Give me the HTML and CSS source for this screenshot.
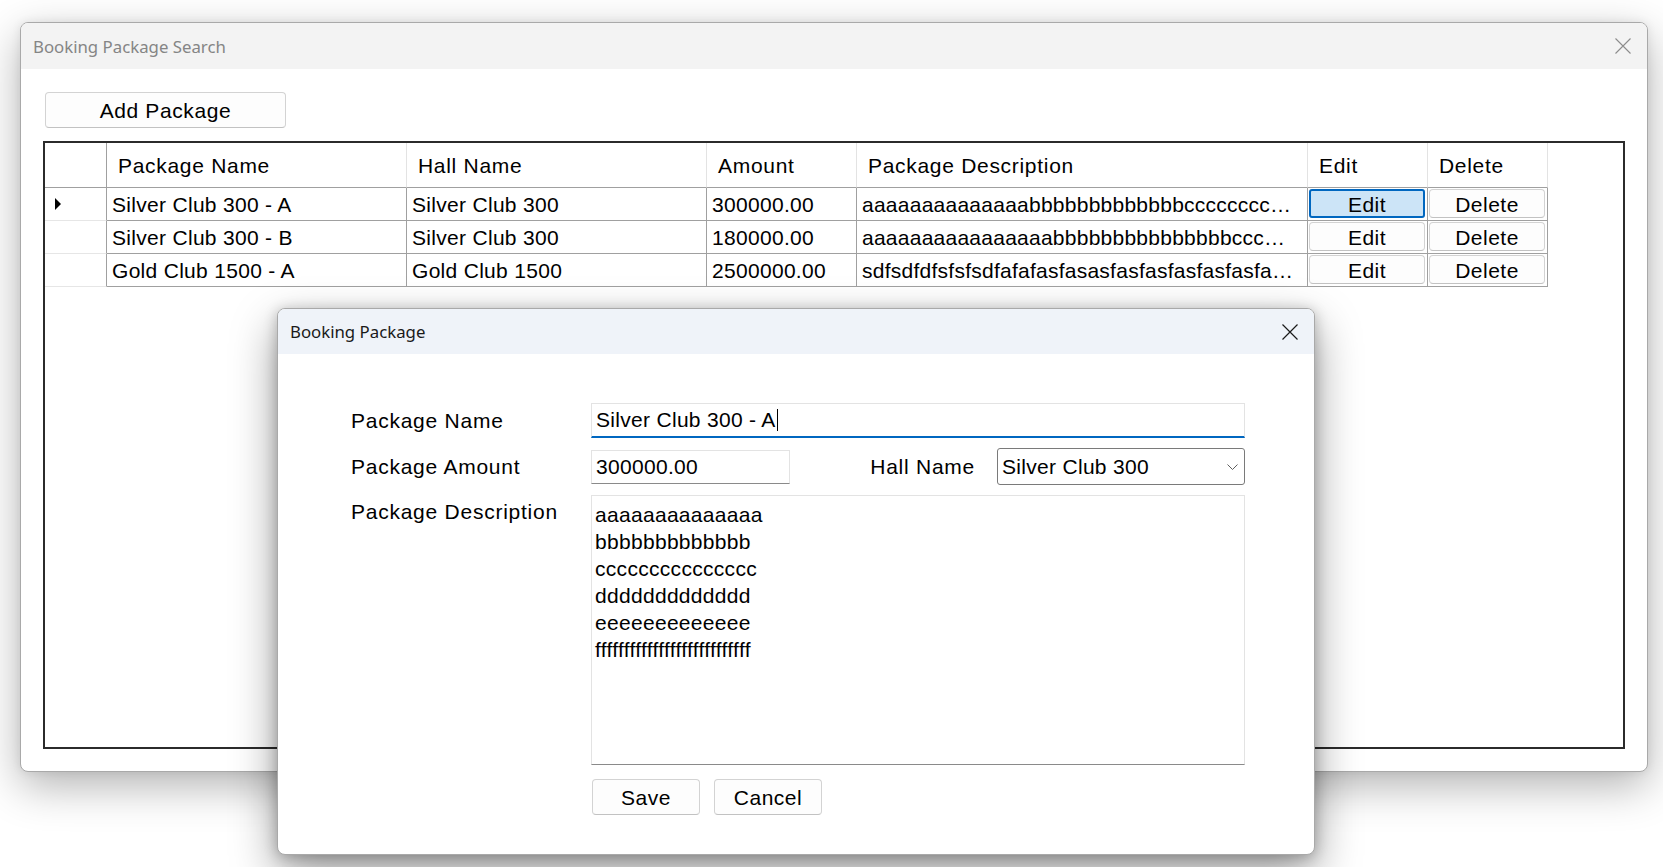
FILE: index.html
```html
<!DOCTYPE html>
<html lang="en">
<head>
<meta charset="utf-8">
<title>Booking Package Search</title>
<link rel="stylesheet" href="styles.css">
</head>
<body>
<div class="window main-window">
  <div class="titlebar">
    <span class="title">Booking Package Search</span>
    <svg class="close" viewBox="0 0 16 16" width="16" height="16"><path d="M0.5 0.5 L15.5 15.5 M15.5 0.5 L0.5 15.5" stroke="#8c8c8c" stroke-width="1.1" fill="none"/></svg>
  </div>
  <div class="main-content">
    <button class="btn add-btn">Add Package</button>
    <div class="grid">
      <div class="gcell rowhead hdr"></div>
      <div class="gcell hdr">Package Name</div>
      <div class="gcell hdr">Hall Name</div>
      <div class="gcell hdr">Amount</div>
      <div class="gcell hdr">Package Description</div>
      <div class="gcell hdr">Edit</div>
      <div class="gcell hdr">Delete</div>

      <div class="gcell rowhead"><span class="current-arrow"></span></div>
      <div class="gcell">Silver Club 300 - A</div>
      <div class="gcell">Silver Club 300</div>
      <div class="gcell">300000.00</div>
      <div class="gcell desc">aaaaaaaaaaaaaabbbbbbbbbbbbbcccccccccccccccdddddddddddddeeeeeeeeeeeeefffffffffffffffffffffffffff</div>
      <div class="gcell btncell"><button class="btn cellbtn selected">Edit</button></div>
      <div class="gcell btncell"><button class="btn cellbtn">Delete</button></div>

      <div class="gcell rowhead"></div>
      <div class="gcell">Silver Club 300 - B</div>
      <div class="gcell">Silver Club 300</div>
      <div class="gcell">180000.00</div>
      <div class="gcell desc">aaaaaaaaaaaaaaaabbbbbbbbbbbbbbbcccccccccccccccddddddddddddd</div>
      <div class="gcell btncell"><button class="btn cellbtn">Edit</button></div>
      <div class="gcell btncell"><button class="btn cellbtn">Delete</button></div>

      <div class="gcell rowhead"></div>
      <div class="gcell">Gold Club 1500 - A</div>
      <div class="gcell">Gold Club 1500</div>
      <div class="gcell">2500000.00</div>
      <div class="gcell desc">sdfsdfdfsfsfsdfafafasfasasfasfasfasfasfasfasfasfasfasf</div>
      <div class="gcell btncell"><button class="btn cellbtn">Edit</button></div>
      <div class="gcell btncell"><button class="btn cellbtn">Delete</button></div>
    </div>
  </div>
</div>

<div class="window dialog">
  <div class="titlebar">
    <span class="title">Booking Package</span>
    <svg class="close" viewBox="0 0 16 16" width="16" height="16"><path d="M0.5 0.5 L15.5 15.5 M15.5 0.5 L0.5 15.5" stroke="#1a1a1a" stroke-width="1.2" fill="none"/></svg>
  </div>
  <div class="form">
    <div class="label">Package Name</div>
    <div class="field name-field">Silver Club 300 - A<span class="caret"></span></div>

    <div class="label">Package Amount</div>
    <div class="amount-row">
      <div class="field amount-field">300000.00</div>
      <div class="hall-group">
        <span class="hall-label">Hall Name</span>
        <div class="combo">
          <span>Silver Club 300</span>
          <svg class="chevron" viewBox="0 0 11 6" width="11" height="6"><path d="M0.5 0.5 L5.5 5.5 L10.5 0.5" stroke="#5f5f5f" stroke-width="1" fill="none"/></svg>
        </div>
      </div>
    </div>

    <div class="label label-top">Package Description</div>
    <div class="field desc-field">aaaaaaaaaaaaaa
bbbbbbbbbbbbb
ccccccccccccccc
ddddddddddddd
eeeeeeeeeeeee
fffffffffffffffffffffffffff</div>

    <div class="actions">
      <button class="btn act-btn">Save</button>
      <button class="btn act-btn">Cancel</button>
    </div>
  </div>
</div>
</body>
</html>
```
FILE: styles.css
```css
* { box-sizing: border-box; }

html, body {
  margin: 0;
  padding: 0;
}

body {
  width: 1663px;
  height: 867px;
  position: relative;
  overflow: hidden;
  background: #ffffff;
  font-family: "Liberation Sans", Arial, sans-serif;
  font-size: 21px;
  color: #000;
}

/* ---------- windows ---------- */
.window {
  position: absolute;
  display: flex;
  flex-direction: column;
  background: #ffffff;
  border: 1px solid #a9a9a9;
  border-radius: 8px;
  overflow: hidden;
}

.main-window {
  left: 20px;
  top: 22px;
  width: 1628px;
  height: 750px;
  box-shadow: 0 14px 44px rgba(0, 0, 0, 0.3), 0 0 10px rgba(0, 0, 0, 0.08);
}

.dialog {
  left: 277px;
  top: 308px;
  width: 1038px;
  height: 547px;
  box-shadow: 0 18px 46px rgba(0, 0, 0, 0.4), 0 2px 14px rgba(0, 0, 0, 0.24);
}

.titlebar {
  flex: none;
  display: flex;
  align-items: center;
  justify-content: space-between;
  padding: 0 16px 0 12px;
  font-family: "Noto Sans", "Open Sans", sans-serif;
  font-size: 16.8px;
}

.main-window .titlebar {
  height: 46px;
  background: #f3f3f3;
  color: #858585;
}

.dialog .titlebar {
  height: 45px;
  background: #eff3f9;
  color: #1a1a1a;
}

.close {
  display: block;
  flex: none;
}

/* ---------- buttons ---------- */
.btn {
  font-family: "Liberation Sans", Arial, sans-serif;
  font-size: 21px;
  letter-spacing: 0.5px;
  color: #000;
  background: #fdfdfd;
  border: 1px solid #d3d3d3;
  border-bottom-color: #c2c2c2;
  border-radius: 4px;
  padding: 0;
  margin: 0;
  text-align: center;
  line-height: 1;
}

/* ---------- main content ---------- */
.main-content {
  flex: 1;
  display: flex;
  flex-direction: column;
  align-items: flex-start;
  padding: 23px 22px 22px 22px;
}

.add-btn {
  margin-left: 2px;
  width: 241px;
  height: 36px;
  letter-spacing: 0.6px;
}

.grid {
  margin-top: 13px;
  align-self: stretch;
  flex: 1;
  border: 2px solid #2b2b2b;
  background: #fff;
  display: grid;
  grid-template-columns: 62px 300px 300px 150px 451px 120px 120px;
  grid-template-rows: 45px 33px 33px 33px;
  align-content: start;
  justify-content: start;
}

.gcell {
  border-right: 1px solid #a0a0a0;
  border-bottom: 1px solid #a0a0a0;
  padding: 1px 6px 0 5px;
  line-height: 31px;
  letter-spacing: 0.3px;
  white-space: nowrap;
  overflow: hidden;
  text-overflow: ellipsis;
}

.gcell.hdr {
  line-height: 43px;
  padding-left: 11px;
  letter-spacing: 0.7px;
  border-right-color: #e3e3e3;
}

.gcell.rowhead {
  border-right-color: #a0a0a0;
  border-bottom-color: #e6e6e6;
  position: relative;
  padding: 0;
}

.gcell.rowhead.hdr {
  border-bottom-color: #a0a0a0;
}

.gcell.desc {
  padding-right: 12px;
  letter-spacing: 0.25px;
}

.current-arrow {
  position: absolute;
  left: 10px;
  top: 10px;
  width: 0;
  height: 0;
  border-left: 6px solid #000;
  border-top: 6px solid transparent;
  border-bottom: 6px solid transparent;
}

.gcell.btncell {
  padding: 1px 2px 2px 1px;
  display: flex;
}

.cellbtn {
  flex: 1;
  height: 100%;
  padding-top: 1px;
}

.cellbtn.selected {
  background: #cce4f7;
  border: 2px solid #0067c0;
  border-radius: 3px;
}

/* ---------- dialog form ---------- */
.form {
  flex: 1;
  display: grid;
  grid-template-columns: 240px 654px;
  grid-template-rows: 35px 37px 270px 36px;
  row-gap: 10px;
  padding: 49px 0 0 73px;
  align-content: start;
  letter-spacing: 0.3px;
}

.label {
  align-self: center;
  white-space: nowrap;
  padding-top: 1px;
  letter-spacing: 0.75px;
}

.label-top {
  align-self: start;
  margin-top: 3px;
  line-height: 26px;
}

.hall-label {
  letter-spacing: 0.75px;
}

.field {
  background: #fff;
  border: 1px solid #e3e3e3;
  white-space: nowrap;
}

.name-field {
  border-bottom: 2px solid #0067c0;
  padding-left: 4px;
  line-height: 32px;
  display: flex;
  align-items: center;
}

.caret {
  display: inline-block;
  width: 1px;
  height: 22px;
  background: #000;
  margin-left: 1px;
}

.amount-row {
  display: flex;
  align-items: center;
  justify-content: space-between;
}

.amount-field {
  width: 199px;
  height: 34px;
  border-bottom-color: #8a8a8a;
  padding-left: 4px;
  line-height: 32px;
}

.hall-group {
  display: flex;
  align-items: center;
  gap: 22px;
  height: 100%;
}

.combo {
  width: 248px;
  height: 37px;
  border: 1px solid #7a7a7a;
  border-radius: 3px;
  display: flex;
  align-items: center;
  justify-content: space-between;
  padding: 0 6px 0 4px;
  background: #fff;
}

.chevron {
  display: block;
}

.desc-field {
  white-space: pre;
  line-height: 27px;
  padding: 5px 3px;
  border-bottom-color: #8a8a8a;
}

.actions {
  grid-column: 2;
  display: flex;
  gap: 14px;
  padding-left: 1px;
  margin-top: 4px;
}

.act-btn {
  width: 108px;
  height: 36px;
}
```
